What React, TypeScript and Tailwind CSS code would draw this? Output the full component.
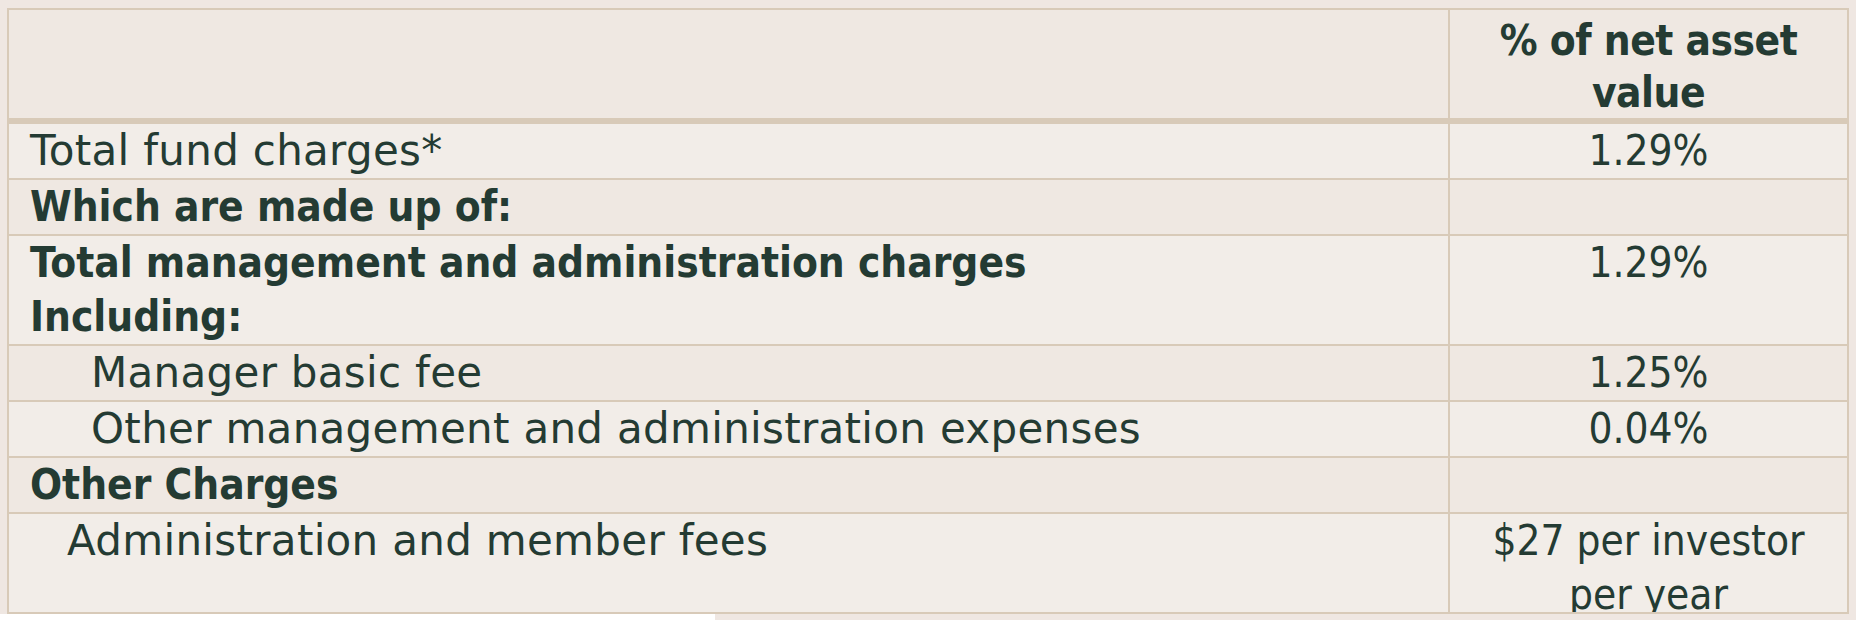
import React from 'react';

type Row = {
    label: string;
    value?: string;
    bold?: boolean;
    indent: string;
    light: boolean;
    height: string;
};

const rows: Row[] = [
    { label: 'Total fund charges*', value: '1.29%', light: true, height: 'h-[54px]', indent: 'pl-[21px]' },
    { label: 'Which are made up of:', bold: true, light: false, height: 'h-[56px]', indent: 'pl-[21px]' },
    {
        label: 'Total management and administration charges\nIncluding:',
        value: '1.29%',
        bold: true,
        light: true,
        height: 'h-[110px]',
        indent: 'pl-[21px]',
    },
    { label: 'Manager basic fee', value: '1.25%', light: false, height: 'h-[56px]', indent: 'pl-[82px]' },
    {
        label: 'Other management and administration expenses',
        value: '0.04%',
        light: true,
        height: 'h-[56px]',
        indent: 'pl-[82px]',
    },
    { label: 'Other Charges', bold: true, light: false, height: 'h-[56px]', indent: 'pl-[21px]' },
    {
        label: 'Administration and member fees',
        value: '$27 per investor per year',
        light: true,
        height: 'h-[100px]',
        indent: 'pl-[58px]',
    },
];

const condensed = "font-['DejaVu_Sans_Condensed','DejaVu_Sans',sans-serif]";

const App: React.FC = () => {
    return (
        <div className="w-[1856px] h-[620px] overflow-hidden bg-[#efe7e2] text-[#243b33] font-['DejaVu_Sans',sans-serif] text-[42px] leading-[54px] pt-[8px]">
            <div className="ml-[7px] w-[1842px] border-2 border-[#d8cab8]">
                {/* header */}
                <div className="flex h-[114px] bg-[#efe8e2] border-b-[6px] border-[#d8cab8]">
                    <div className="w-[1441px] border-r-2 border-[#d8cab8]"></div>
                    <div className={`flex-1 text-center leading-[52px] pt-[5px] tracking-[-0.5px] font-bold ${condensed}`}>
                        % of net asset
                        <br />
                        value
                    </div>
                </div>

                {rows.map((row, i) => (
                    <div
                        key={i}
                        className={`flex overflow-hidden ${row.height} ${
                            row.light ? 'bg-[#f2ede8]' : 'bg-[#efe8e2]'
                        } ${i > 0 ? 'border-t-2 border-[#d8cab8]' : ''}`}
                    >
                        <div
                            className={`w-[1441px] border-r-2 border-[#d8cab8] whitespace-pre-line ${row.indent} ${
                                row.bold ? `font-bold ${condensed}` : 'tracking-[0.3px]'
                            }`}
                        >
                            {row.label}
                        </div>
                        <div className={`flex-1 text-center px-6 ${condensed}`}>{row.value}</div>
                    </div>
                ))}
            </div>
            <div className="flex h-[6px]">
                <div className="w-[715px] bg-white"></div>
            </div>
        </div>
    );
};

export default App;
